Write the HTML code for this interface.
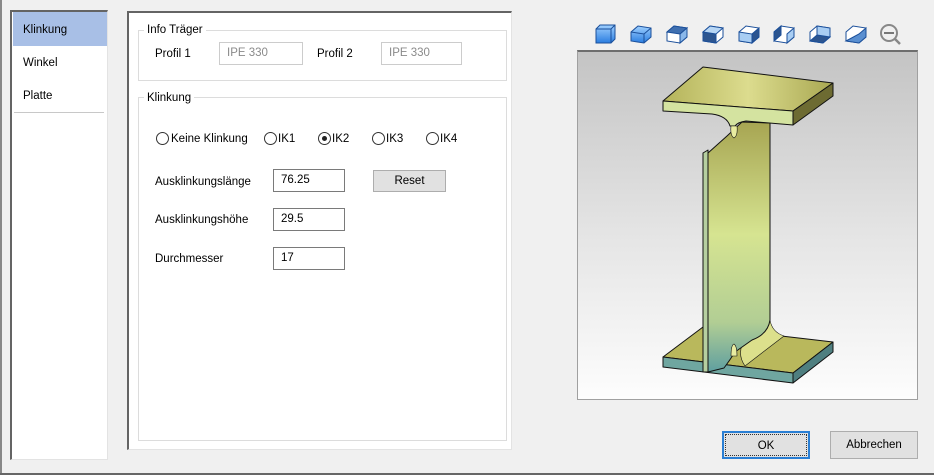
<!DOCTYPE html>
<html><head><meta charset="utf-8"><style>
*{box-sizing:border-box;margin:0;padding:0}
body{width:934px;height:475px;background:#f0f0f0;position:relative;overflow:hidden;font-family:"Liberation Sans",sans-serif;font-size:11.5px;color:#000}
.a{position:absolute}
.t{position:absolute;white-space:nowrap;line-height:14px}
.inp{position:absolute;background:#fff;border:1px solid #7a7a7a;padding:2px 0 0 7px;font-size:11.5px;line-height:16px}
.dis{border-color:#ccc;color:#8a8a8a;background:#fff}
.grp{position:absolute;border:1px solid #dcdcdc}
.gl{position:absolute;background:#fff;padding:0 3px;line-height:14px}
.rb{position:absolute;width:13px;height:13px;border:1px solid #333;border-radius:50%;background:#fff}
.btn{position:absolute;background:#e1e1e1;border:1px solid #adadad;text-align:center;font-size:11.5px}
</style></head><body>
<div class="a" style="left:0;top:0;width:2px;height:475px;background:#888"></div>
<div class="a" style="left:0;top:473px;width:934px;height:2px;background:#666"></div>
<!-- left list -->
<div class="a" style="left:10px;top:10px;width:98px;height:450px;background:#fff;border-left:2px solid #646464;border-top:2px solid #646464;border-right:1px solid #e3e3e3;border-bottom:1px solid #e3e3e3"></div>
<div class="a" style="left:13px;top:12px;width:94px;height:34px;background:#a8bfe6"></div>
<div class="t" style="left:23px;top:23px">Klinkung</div>
<div class="t" style="left:23px;top:56px">Winkel</div>
<div class="t" style="left:23px;top:89px">Platte</div>
<div class="a" style="left:14px;top:112px;width:90px;height:1px;background:#c8c8c8"></div>
<!-- main panel -->
<div class="a" style="left:127px;top:11px;width:385px;height:439px;background:#fff;border-left:2px solid #646464;border-top:2px solid #646464;border-right:1px solid #e3e3e3;border-bottom:1px solid #e3e3e3"></div>
<div class="grp" style="left:138px;top:30px;width:369px;height:51px"></div>
<div class="gl" style="left:144px;top:23px">Info Träger</div>
<div class="t" style="left:155px;top:47px">Profil 1</div>
<div class="inp dis" style="left:219px;top:42px;width:84px;height:23px">IPE 330</div>
<div class="t" style="left:317px;top:47px">Profil 2</div>
<div class="inp dis" style="left:381px;top:42px;width:81px;height:23px">IPE 330</div>
<div class="grp" style="left:138px;top:97px;width:369px;height:344px"></div>
<div class="gl" style="left:144px;top:91px">Klinkung</div>
<div class="rb" style="left:156px;top:132px"></div><div class="t" style="left:171px;top:132px">Keine Klinkung</div>
<div class="rb" style="left:264px;top:132px"></div><div class="t" style="left:278px;top:132px">IK1</div>
<div class="rb" style="left:318px;top:132px"><div class="a" style="left:3px;top:3px;width:5px;height:5px;border-radius:50%;background:#222"></div></div><div class="t" style="left:332px;top:132px">IK2</div>
<div class="rb" style="left:372px;top:132px"></div><div class="t" style="left:386px;top:132px">IK3</div>
<div class="rb" style="left:426px;top:132px"></div><div class="t" style="left:440px;top:132px">IK4</div>
<div class="t" style="left:155px;top:175px">Ausklinkungslänge</div>
<div class="inp" style="left:273px;top:169px;width:72px;height:23px">76.25</div>
<div class="btn" style="left:373px;top:170px;width:73px;height:22px;line-height:20px">Reset</div>
<div class="t" style="left:155px;top:213px">Ausklinkungshöhe</div>
<div class="inp" style="left:273px;top:208px;width:72px;height:23px">29.5</div>
<div class="t" style="left:155px;top:252px">Durchmesser</div>
<div class="inp" style="left:273px;top:247px;width:72px;height:23px">17</div>
<!-- toolbar icons -->
<svg class="a" style="left:590px;top:20px" width="320" height="28" viewBox="0 0 320 28">
<defs><linearGradient id="bl" x1="0" y1="0" x2="0" y2="1"><stop offset="0" stop-color="#9fd0ff"/><stop offset="1" stop-color="#2a7de0"/></linearGradient></defs>
<g stroke="#1b4f9a" stroke-width="1">
<path d="M6 9 L10 5 L25 5 L25 19 L21 23 L6 23 Z" fill="url(#bl)"/><path d="M6 9 L21 9 L25 5 M21 9 L21 23" fill="none"/>
<path d="M41 12 L48 6 L61 8 L61 17 L54 23 L41 21 Z" fill="url(#bl)"/><path d="M41 12 L54 14 L61 8 M54 14 L54 23" fill="none"/>
<g transform="translate(36,0)"><path d="M41 12 L48 6 L61 8 L61 17 L54 23 L41 21 Z" fill="#fff"/><path d="M41 12 L48 6 L61 8 L54 14 Z" fill="#3f6fb0"/><path d="M54 14 L61 8 L61 17 L54 23 Z" fill="#8ab8ea"/></g>
<g transform="translate(72,0)"><path d="M41 12 L48 6 L61 8 L61 17 L54 23 L41 21 Z" fill="#fff"/><path d="M41 12 L54 14 L54 23 L41 21 Z" fill="#2c5590"/><path d="M48 6 L61 8 L54 14 L41 12Z" fill="#b7d6f5"/></g>
<g transform="translate(108,0)"><path d="M41 12 L48 6 L61 8 L61 17 L54 23 L41 21 Z" fill="#fff"/><path d="M54 14 L61 8 L61 17 L54 23 Z" fill="#2c5590"/><path d="M41 12 L54 14 L54 23 L41 21Z" fill="#a8cdf3"/></g>
<g transform="translate(143,0)"><path d="M41 12 L48 6 L61 8 L61 17 L54 23 L41 21 Z" fill="#fff"/><path d="M41 12 L48 6 L48 15 L41 21 Z" fill="#2c5590"/><path d="M54 14 L61 8 L61 17 L54 23Z" fill="#a8cdf3"/></g>
<g transform="translate(179,0)"><path d="M41 12 L48 6 L61 8 L61 17 L54 23 L41 21 Z" fill="#fff"/><path d="M41 21 L48 15 L61 17 L54 23 Z" fill="#2c5590"/><path d="M48 6 L61 8 L61 17 L48 15Z" fill="#a8cdf3"/></g>
<g transform="translate(215,0)"><path d="M41 12 L48 6 L61 8 L61 17 L54 23 L41 21 Z" fill="#fff"/><path d="M41 21 L54 14 L61 8 L61 17 L54 23 Z" fill="#5a8fd0"/></g>
</g>
<circle cx="299" cy="13" r="8" fill="none" stroke="#888" stroke-width="2"/><path d="M294 13 H304" stroke="#777" stroke-width="2"/><path d="M305 19 L310 24" stroke="#888" stroke-width="2.5"/>
</svg>
<!-- viewer -->
<div class="a" style="left:577px;top:50px;width:341px;height:350px;border:1px solid #a0a0a0;border-top:2px solid #6e6e6e;background:linear-gradient(#c4c4c4,#e6e6e6 55%,#fdfdfd)"></div>
<svg class="a" style="left:0;top:0" width="934" height="475">
<defs>
<linearGradient id="w" x1="0" y1="0" x2="0" y2="1"><stop offset="0" stop-color="#a7a552"/><stop offset=".45" stop-color="#d6e491"/><stop offset=".8" stop-color="#b2ce94"/><stop offset="1" stop-color="#5f9fa0"/></linearGradient>
<linearGradient id="tf" x1="0" y1="0" x2="1" y2="0"><stop offset="0" stop-color="#b4b35a"/><stop offset=".5" stop-color="#dcdc8e"/><stop offset="1" stop-color="#a9a852"/></linearGradient>
</defs>
<g stroke="#111" stroke-width="1" stroke-linejoin="round">
<!-- bottom flange -->
<path d="M663 357 L703 327 L833 342 L793 373 Z" fill="#b9b85c"/>
<path d="M663 357 L793 373 L793 383 L663 367 Z" fill="#6fa6a0"/>
<path d="M793 373 L833 342 L833 352 L793 383 Z" fill="#4f7f80"/>
<path d="M770 320 Q772 332 784 336 L745 366 Q738 356 742 345 Z" fill="#dce08c" stroke-width=".6"/>
<!-- web -->
<path d="M708 153 L727 136 L742 122 L770 123 L770 320 Q768 334 752 340 L735 352 Q730 360 724 368 L708 372 Z" fill="url(#w)"/>
<path d="M703 153 L708 150 L708 372 L703 372 Z" fill="#b6cfa0"/>
<!-- top flange -->
<path d="M703 67 L833 83 L793 111 L663 101 Z" fill="url(#tf)"/>
<path d="M663 101 L793 111 L793 125 L746 121 Q738 122 735 126 L730 126 Q727 116 712 114 L663 111 Z" fill="#d4e3a0"/>
<path d="M793 111 L833 83 L833 96 L793 125 Z" fill="#6d6b32"/>
<path d="M731 126 Q730 136 734 138 Q738 136 737 126 Z" fill="#e8eca0" stroke-width=".6"/>
<path d="M731 356 Q731 345 734 344 Q737 346 737 356 Z" fill="#e8eca0" stroke-width=".6"/>
</g>
</svg>
<!-- buttons -->
<div class="btn" style="left:722px;top:431px;width:88px;height:28px;line-height:26px;border:2px solid #2a7fd4;outline:1px dotted #333;outline-offset:-4px">OK</div>
<div class="btn" style="left:830px;top:431px;width:88px;height:28px;line-height:26px">Abbrechen</div>
</body></html>
